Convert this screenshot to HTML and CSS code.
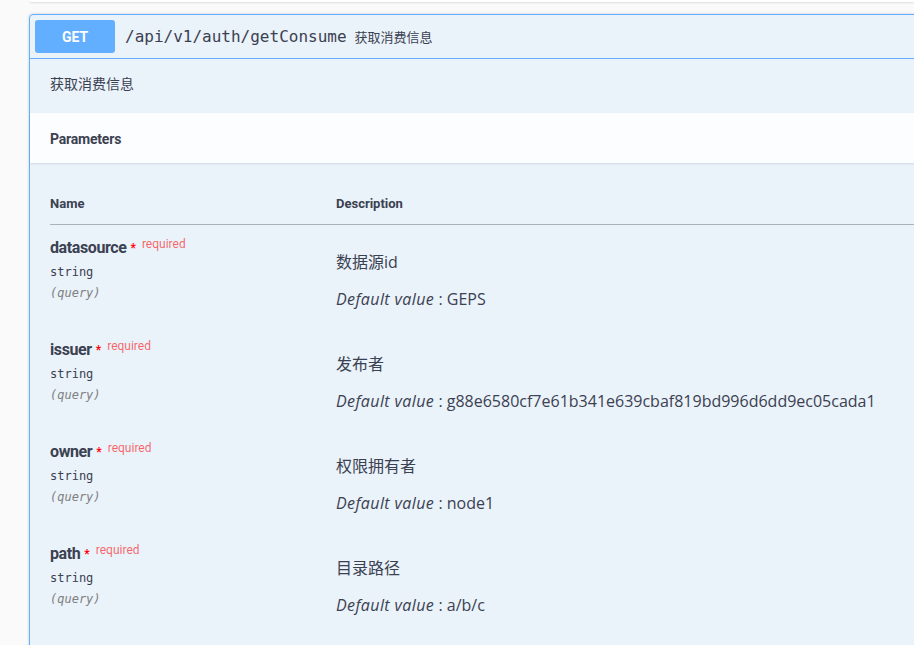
FILE: index.html
```html
<!DOCTYPE html>
<html lang="zh">
<head>
<meta charset="utf-8">
<link rel="stylesheet" href="styles.css">
</head>
<body>
<div class="prev-edge"></div>
<div class="page">
  <div class="opblock">
    <div class="summary">
      <span class="method">GET</span>
      <span class="path">/api/v1/auth/getConsume</span>
      <span class="summary-desc">获取消费信息</span>
    </div>
    <div class="desc-wrapper">
      <p>获取消费信息</p>
    </div>
    <div class="section-header">
      <h4>Parameters</h4>
    </div>
    <div class="table-container">
      <table class="parameters">
        <thead>
          <tr>
            <th class="col-name">Name</th>
            <th class="col-desc">Description</th>
          </tr>
        </thead>
        <tbody>
          <tr>
            <td class="col-name">
              <div class="pname">datasource<span class="star">*</span><span class="req">required</span></div>
              <div class="ptype">string</div>
              <div class="pin">(query)</div>
            </td>
            <td class="col-desc">
              <p>数据源id</p>
              <p class="default"><i>Default value</i> : GEPS</p>
            </td>
          </tr>
          <tr>
            <td class="col-name">
              <div class="pname">issuer<span class="star">*</span><span class="req">required</span></div>
              <div class="ptype">string</div>
              <div class="pin">(query)</div>
            </td>
            <td class="col-desc">
              <p>发布者</p>
              <p class="default"><i>Default value</i> : g88e6580cf7e61b341e639cbaf819bd996d6dd9ec05cada1</p>
            </td>
          </tr>
          <tr>
            <td class="col-name">
              <div class="pname">owner<span class="star">*</span><span class="req">required</span></div>
              <div class="ptype">string</div>
              <div class="pin">(query)</div>
            </td>
            <td class="col-desc">
              <p>权限拥有者</p>
              <p class="default"><i>Default value</i> : node1</p>
            </td>
          </tr>
          <tr>
            <td class="col-name">
              <div class="pname">path<span class="star">*</span><span class="req">required</span></div>
              <div class="ptype">string</div>
              <div class="pin">(query)</div>
            </td>
            <td class="col-desc">
              <p>目录路径</p>
              <p class="default"><i>Default value</i> : a/b/c</p>
            </td>
          </tr>
        </tbody>
      </table>
    </div>
  </div>
</div>
</body>
</html>
```
FILE: styles.css
```css
html, body {
  margin: 0;
  padding: 0;
  overflow: hidden;
  background: #fafafa;
  color: #3b4151;
  font-family: "Open Sans", "Noto Sans CJK SC", sans-serif;
}

.prev-edge {
  margin-left: 30px;
  height: 2px;
  background: #ffffff;
  box-shadow: 0 1px 2px rgba(0, 0, 0, 0.12);
}

.page {
  padding: 12px 0 0 29px;
  width: 1100px;
}

.opblock {
  border: 1px solid #61affe;
  border-radius: 4px;
  background: rgba(97, 175, 254, 0.1);
  box-shadow: 0 0 3px rgba(0, 0, 0, 0.19);
  height: 700px;
}

.summary {
  display: flex;
  align-items: center;
  padding: 5px;
  border-bottom: 1px solid #61affe;
}

.method {
  display: flex;
  align-items: center;
  justify-content: center;
  width: 80px;
  height: 33px;
  border-radius: 3px;
  background: #61affe;
  color: #ffffff;
  font-family: Roboto, sans-serif;
  font-weight: 700;
  font-size: 14px;
}

.path {
  padding: 0 10px;
  font-family: "DejaVu Sans Mono", monospace;
  font-size: 16px;
  color: #3b4151;
}

.summary-desc {
  font-size: 13px;
  font-family: "Noto Sans CJK SC", sans-serif;
  color: #3b4151;
  margin-left: -2px;
}

.desc-wrapper {
  padding: 14px 20px 20px;
}

.desc-wrapper p {
  margin: 0;
  font-size: 14px;
  line-height: 20px;
  font-family: "Noto Sans CJK SC", sans-serif;
}

.section-header {
  display: flex;
  align-items: center;
  min-height: 50px;
  padding: 2px 20px 0;
  box-sizing: border-box;
  background: rgba(255, 255, 255, 0.8);
  box-shadow: 0 1px 2px rgba(0, 0, 0, 0.1);
}

.section-header h4 {
  margin: 0;
  font-family: Roboto, sans-serif;
  font-size: 14px;
  font-weight: 700;
  letter-spacing: -0.2px;
}

.table-container {
  padding: 20px;
}

.parameters {
  width: 100%;
  border-collapse: collapse;
}

.parameters th {
  text-align: left;
  font-family: Roboto, sans-serif;
  font-size: 13px;
  font-weight: 700;
  line-height: 16px;
  padding: 13px 0 12px;
  border-bottom: 1px solid rgba(59, 65, 81, 0.2);
}

.col-name {
  width: 286px;
}

.parameters td {
  vertical-align: top;
  padding: 12px 0 0;
}

.pname {
  font-family: Roboto, sans-serif;
  font-size: 16px;
  font-weight: 700;
  line-height: 22px;
  letter-spacing: -0.4px;
}

.star {
  margin-left: 4px;
  color: #ff0000;
  font-size: 12px;
  font-weight: 700;
  letter-spacing: 0;
  position: relative;
  top: -1px;
}

.req {
  position: relative;
  top: -5px;
  padding: 5px 5px 5px 6px;
  font-size: 12px;
  font-weight: 400;
  letter-spacing: 0;
  color: rgba(255, 0, 0, 0.6);
}

.ptype {
  padding: 4px 0 5px;
  font-family: "DejaVu Sans Mono", monospace;
  font-size: 12px;
  line-height: 16px;
}

.pin {
  font-family: "DejaVu Sans Mono", monospace;
  font-size: 12px;
  line-height: 16px;
  font-style: italic;
  color: #808080;
}

.col-desc p {
  margin: 15px 0 16px;
  font-size: 16px;
  line-height: 21px;
}

.col-desc p i {
  letter-spacing: 0.4px;
}

.col-desc p.default {
  margin-bottom: 17px;
}
```
